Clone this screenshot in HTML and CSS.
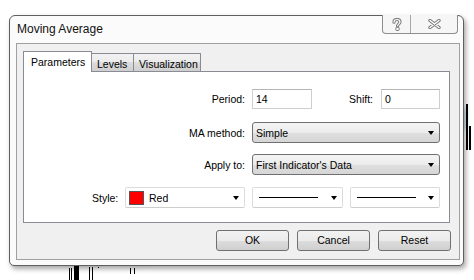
FILE: index.html
```html
<!DOCTYPE html>
<html>
<head>
<meta charset="utf-8">
<link rel="stylesheet" href="styles.css">
</head>
<body>
<div class="desk">
  <div class="chart">
    <span class="glow g1"></span><span class="glow g2"></span><span class="glow g3"></span><span class="glow g4"></span>
    <span class="bar b1"></span><span class="bar b2"></span><span class="bar b3"></span><span class="bar b4"></span>
    <span class="bar b5"></span><span class="bar b6"></span><span class="bar b7"></span><span class="bar b8"></span>
    <span class="bar b9"></span><span class="bar b10"></span>
  </div>
  <div class="window">
    <div class="titlebar">
      <span class="title">Moving Average</span>
      <div class="caption-btns">
        <div class="cbtn help">
          <svg width="10" height="13" viewBox="0 0 10 13">
            <path d="M2 4.2 C2 2 3.4 1.5 5 1.5 C6.8 1.5 8 2.4 8 4 C8 5.6 5.8 6 5.6 7.8" fill="none" stroke="#7a7a7a" stroke-width="3.2" stroke-linecap="round"/>
            <path d="M2 4.2 C2 2 3.4 1.5 5 1.5 C6.8 1.5 8 2.4 8 4 C8 5.6 5.8 6 5.6 7.8" fill="none" stroke="#fff" stroke-width="1.2" stroke-linecap="round"/>
            <rect x="3.9" y="9.3" width="3.2" height="3.2" rx="0.6" fill="#fff" stroke="#7a7a7a" stroke-width="1"/>
          </svg>
        </div>
        <div class="cbtn close">
          <svg width="13" height="10" viewBox="0 0 13 10">
            <path d="M2 1.5 L11 8.5 M11 1.5 L2 8.5" fill="none" stroke="#7a7a7a" stroke-width="3.4" stroke-linecap="round"/>
            <path d="M2 1.5 L11 8.5 M11 1.5 L2 8.5" fill="none" stroke="#fff" stroke-width="1.4" stroke-linecap="round"/>
          </svg>
        </div>
      </div>
    </div>
    <div class="client">
      <div class="tabs">
        <div class="tab active">Parameters</div>
        <div class="tab">Levels</div>
        <div class="tab">Visualization</div>
      </div>
      <div class="panel">
        <div class="row r1">
          <span class="label">Period:</span>
          <div class="input w-period">14</div>
          <span class="label shift">Shift:</span>
          <div class="input w-shift">0</div>
        </div>
        <div class="row r2">
          <span class="label">MA method:</span>
          <div class="combo w-wide"><span>Simple</span><i class="arrow"></i></div>
        </div>
        <div class="row r3">
          <span class="label">Apply to:</span>
          <div class="combo w-wide"><span>First Indicator's Data</span><i class="arrow"></i></div>
        </div>
        <div class="row r4">
          <span class="label style-label">Style:</span>
          <div class="owner w-color"><span class="swatch"></span><span class="owner-text">Red</span><i class="arrow"></i></div>
          <div class="owner w-line1"><span class="line"></span><i class="arrow"></i></div>
          <div class="owner w-line2"><span class="line"></span><i class="arrow"></i></div>
        </div>
      </div>
      <div class="buttons">
        <div class="btn">OK</div>
        <div class="btn">Cancel</div>
        <div class="btn">Reset</div>
      </div>
    </div>
  </div>
</div>
</body>
</html>
```

FILE: styles.css
```css
* { box-sizing: border-box; }
html, body { margin: 0; padding: 0; background: #fff; }
body {
  width: 474px; height: 280px; overflow: hidden;
  font-family: "Liberation Sans", Arial, sans-serif;
  font-size: 10.5px; color: #000;
}
.desk {
  position: relative;
  width: 474px; height: 280px;
  padding: 15px 0 0 9px;
}

/* background chart fragments */
.chart { position: absolute; inset: 0; }
.bar { position: absolute; background: #000; }
.glow { position: absolute; background: #bcd2e6; border-radius: 3px; filter: blur(1.5px); opacity: .8; }
.g1 { left: 462px; top: 108px; width: 4px; height: 22px; }
.g2 { left: 68px; top: 261px; width: 14px; height: 4px; }
.g3 { left: 88px; top: 261px; width: 14px; height: 4px; }
.g4 { left: 121px; top: 261px; width: 26px; height: 4px; }
.b1 { left: 466px; top: 104px; width: 2px; height: 46px; }
.b2 { left: 469px; top: 126px; width: 2px; height: 24px; }
.b3 { left: 69px; top: 268px; width: 1px; height: 12px; }
.b4 { left: 71px; top: 268px; width: 1px; height: 12px; }
.b5 { left: 74px; top: 266px; width: 5px; height: 14px; }
.b6 { left: 89px; top: 267px; width: 1px; height: 13px; }
.b7 { left: 92px; top: 267px; width: 1px; height: 13px; }
.b8 { left: 98px; top: 267px; width: 1px; height: 1px; }
.b9 { left: 130px; top: 268px; width: 1px; height: 6px; }
.b10 { left: 134px; top: 268px; width: 1px; height: 6px; }

/* window */
.window {
  position: relative;
  width: 455px;
  border: 1px solid #5f5f5f;
  border-radius: 6px 6px 5px 5px;
  background: #fbfbfb;
  box-shadow: 2px 3px 5px rgba(0,0,0,.35);
  padding-bottom: 5px;
}
.titlebar {
  height: 27px;
  display: flex;
  justify-content: space-between;
  align-items: flex-start;
}
.title {
  font-family: "Liberation Sans", Arial, sans-serif;
  font-size: 12px;
  color: #111;
  padding: 6px 0 0 7px;
}
.caption-btns {
  display: flex;
  margin-right: 5px;
  margin-top: -1px;
  border: 1px solid #8e8e8e;
  border-top: none;
  border-radius: 0 0 4px 4px;
  background: #f6f6f6;
  height: 19px;
}
.cbtn { display: flex; align-items: center; justify-content: center; height: 18px; }
.help { width: 28px; border-right: 1px solid #a8a8a8; }
.close { width: 46px; }

.client {
  margin-left: 6px;
  width: 444px;
  height: 217px;
  border: 1px solid #a0a0a0;
  background: #f0f0f0;
  padding: 7px 8px 0 6px;
  display: flex;
  flex-direction: column;
}

/* tabs */
.tabs { display: flex; align-items: flex-end; height: 20px; position: relative; z-index: 1; }
.tab {
  height: 18px;
  border: 1px solid #898c95;
  border-bottom: none;
  border-left: none;
  background: linear-gradient(#f2f2f2 0%, #ebebeb 50%, #dddddd 50%, #cfcfcf 100%);
  padding: 3px 5px 0 5px;
  line-height: 14px;
}
.tab.active {
  height: 21px;
  margin-bottom: -1px;
  background: #fff;
  border-left: 1px solid #898c95;
  padding: 3px 8px 0 7px;
  width: 69px;
}
.tab:nth-child(2) { width: 42px; }
.tab:nth-child(3) { width: 67px; }

.panel {
  width: 427px;
  height: 152px;
  border: 1px solid #898c95;
  background: #fff;
  padding-top: 17px;
}
.row { display: flex; align-items: center; }
.r1 { height: 20px; }
.r2 { height: 21px; margin-top: 13px; }
.r3 { height: 21px; margin-top: 11px; }
.r4 { height: 21px; margin-top: 12px; padding-left: 68px; }
.label { width: 221px; text-align: right; margin-right: 7px; flex: none; }
.label.shift { width: 61px; margin-right: 8px; }
.label.style-label { width: 33px; text-align: left; margin-right: 0; }

.input {
  height: 20px;
  border: 1px solid #cfcfcf;
  border-top-color: #b5b5b5;
  background: #fff;
  padding: 3px 0 0 3px;
  line-height: 13px;
}
.w-period { width: 60px; }
.w-shift { width: 59px; }

.combo {
  height: 21px;
  border: 1px solid #707070;
  border-radius: 3px;
  background: linear-gradient(#f4f4f4 0%, #ececec 50%, #dfdfdf 50%, #d6d6d6 100%);
  display: flex; align-items: center; justify-content: space-between;
  padding: 0 5px 0 3px;
}
.w-wide { width: 188px; }
.arrow {
  width: 0; height: 0;
  border-left: 3.5px solid transparent;
  border-right: 3.5px solid transparent;
  border-top: 4px solid #000;
  flex: none;
}

.owner {
  height: 21px;
  border: 1px solid #dcdcdc;
  border-bottom-color: #cdcdcd;
  border-radius: 2px;
  background: #fff;
  display: flex; align-items: center;
  padding: 0 5px 0 3px;
  margin-right: 7px;
}
.w-color { width: 120px; }
.w-line1 { width: 91px; }
.w-line2 { width: 90px; margin-right: 0; }
.swatch { width: 15px; height: 14px; background: #ff0000; border: 1px solid #555; flex: none; }
.owner-text { margin-left: 5px; flex: 1; }
.line { height: 1px; background: #000; margin-left: 3px; width: 59px; }
.owner .line + .arrow { margin-left: auto; }

.buttons {
  display: flex;
  justify-content: flex-end;
  gap: 8px;
  margin-top: 7px;
}
.btn {
  width: 73px; height: 21px;
  border: 1px solid #707070;
  border-radius: 3px;
  background: linear-gradient(#f2f2f2 0%, #ebebeb 50%, #dddddd 50%, #cfcfcf 100%);
  text-align: center;
  line-height: 19px;
}
```
